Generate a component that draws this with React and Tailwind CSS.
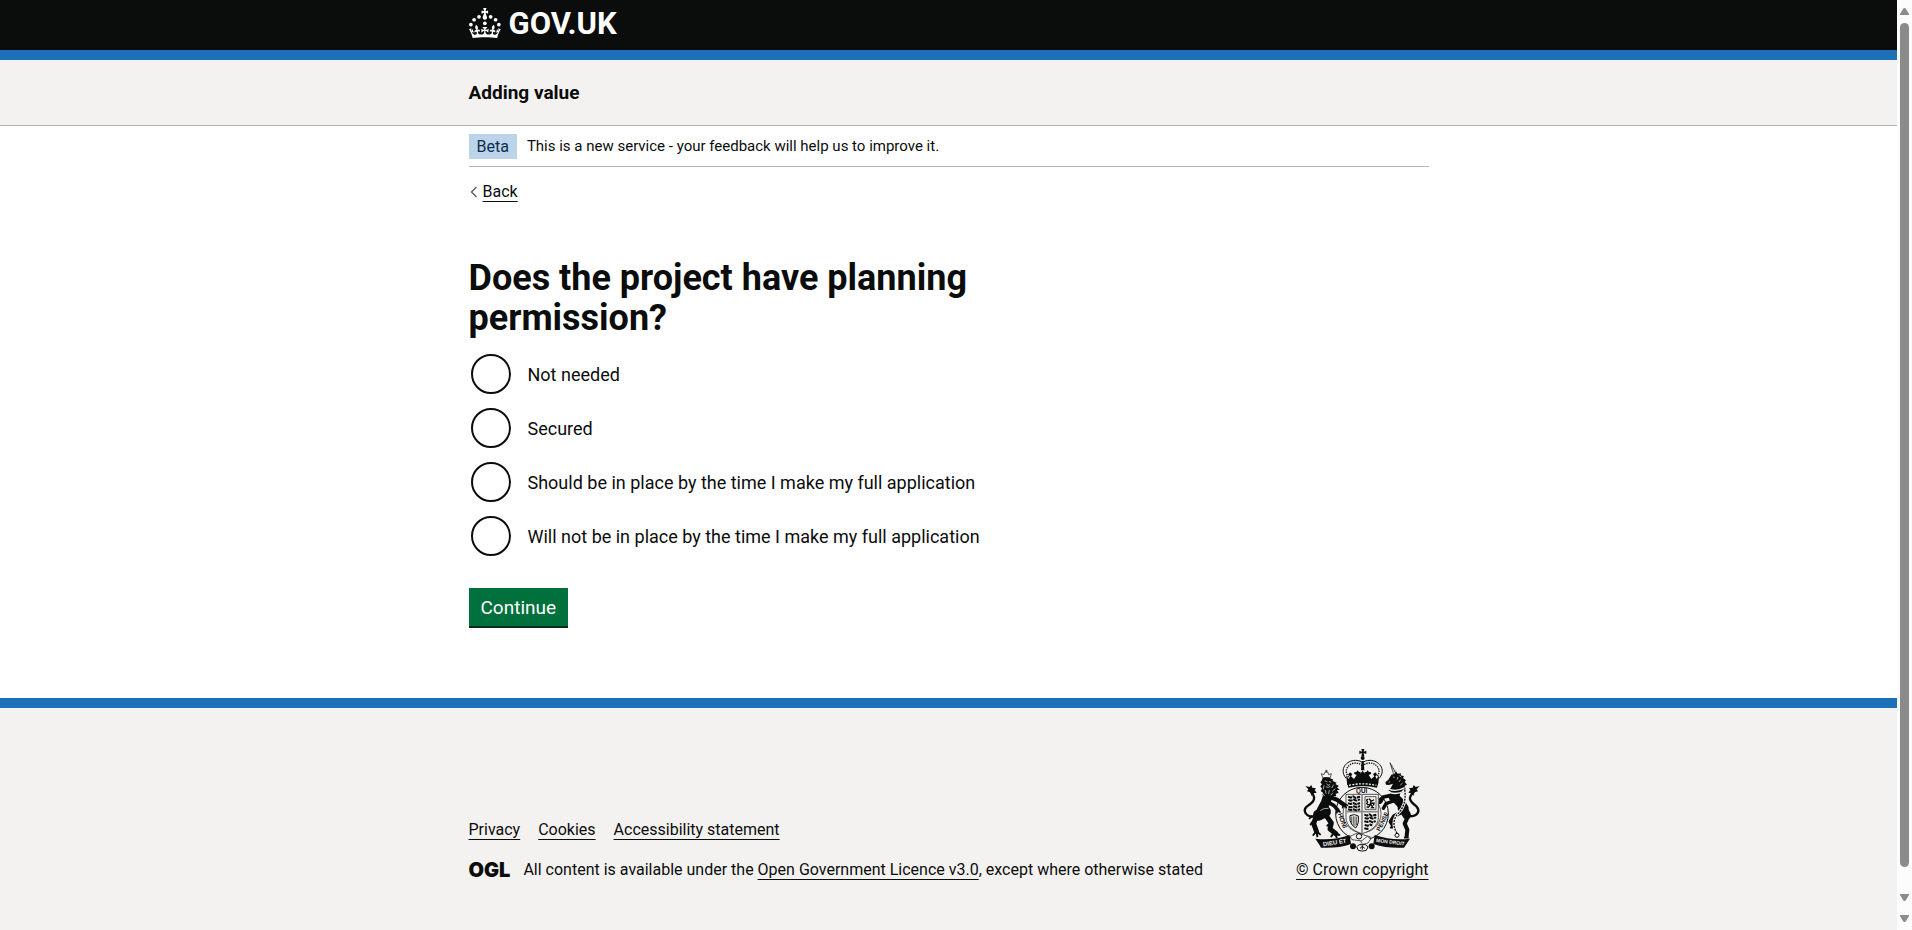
const OPTIONS = [
  'Not needed',
  'Secured',
  'Should be in place by the time I make my full application',
  'Will not be in place by the time I make my full application',
];

const LINK = 'underline decoration-1 underline-offset-4';

function Container({ className = '', children }) {
  return <div className={`mx-auto w-full max-w-[960px] ${className}`}>{children}</div>;
}

function Crown() {
  return (
    <svg viewBox="0 0 64 60" className="h-[30px] w-8" fill="currentColor" aria-hidden="true">
      <circle cx="20" cy="17.6" r="3.7" />
      <circle cx="10.2" cy="23.5" r="3.7" />
      <circle cx="3.7" cy="33.2" r="3.7" />
      <circle cx="31.7" cy="30.6" r="3.7" />
      <circle cx="43.3" cy="17.6" r="3.7" />
      <circle cx="53.2" cy="23.5" r="3.7" />
      <circle cx="59.7" cy="33.2" r="3.7" />
      <path d="M33.1,9.8c.2-.1.3-.3.5-.5l4.6,2.4v-6.8l-4.6,1.5c-.1-.2-.3-.3-.5-.5l1.9-5.9h-6.7l1.9,5.9c-.2.1-.3.3-.5.5l-4.6-1.5v6.8l4.6-2.4c.1.2.3.3.5.5l-2.6,8c-.9,2.8,1.2,5.7,4.1,5.7h0c3,0,5.1-2.9,4.1-5.7l-2.6-8ZM37,37.9s-3.4,3.8-4.1,6.1c2.2,0,4.2-.5,6.4-2.8l-.7,8.5c-2-2.8-4.4-4.1-5.7-3.8.1,3.1.5,6.7,5.8,7.2,3.7.3,6.7-1.5,7-3.8.4-2.6-2-4.3-3.7-1.6-1.4-4.5,2.4-6.1,4.9-3.2-1.9-4.5-1.8-7.7,2.4-10.9,3,4,2.6,7.3-1.2,11.1,2.4-1.3,6.2,0,4,4.6-1.2-2.8-3.7-2.2-4.2.2-.3,1.7.7,3.7,3,4.2,1.9.3,4.7-.9,7-5.9-1.3,0-2.4.7-3.9,1.7l2.4-8c.6,2.3,1.4,3.7,2.2,4.5.6-1.6.5-2.8,0-5.3l5,1.8c-2.6,3.6-5.2,8.7-7.3,17.5-7.4-1.1-15.7-1.7-24.5-1.7h0c-8.8,0-17.1.6-24.5,1.7-2.1-8.9-4.7-13.9-7.3-17.5l5-1.8c-.5,2.5-.6,3.7,0,5.3.8-.8,1.6-2.3,2.2-4.5l2.4,8c-1.5-1-2.6-1.7-3.9-1.7,2.3,5,5.2,6.2,7,5.9,2.3-.4,3.3-2.4,3-4.2-.5-2.4-3-3.1-4.2-.2-2.2-4.6,1.6-6,4-4.6-3.7-3.7-4.2-7.1-1.2-11.1,4.2,3.2,4.3,6.4,2.4,10.9,2.5-2.8,6.3-1.3,4.9,3.2-1.8-2.7-4.1-1-3.7,1.6.3,2.3,3.3,4.1,7,3.8,5.4-.5,5.7-4.2,5.8-7.2-1.3-.2-3.7,1-5.7,3.8l-.7-8.5c2.2,2.3,4.2,2.7,6.4,2.8-.7-2.3-4.1-6.1-4.1-6.1h10.6Z" />
    </svg>
  );
}

function CoatOfArms() {
  return (
    <svg viewBox="72 35 360 315" className="h-[105px] w-[120px]" fill="#0b0c0c" aria-hidden="true">
      {/* crown */}
      <path d="M250 38h9l-2 8 8-3v10l-8-3 2 10h-9l2-10-8 3v-10l8 3z" />
      <circle cx="254" cy="65" r="6" />
      <path d="M204 126c-22-28 2-54 28-54 11 0 18 3 22 8 4-5 11-8 22-8 26 0 50 26 28 54" fill="none" stroke="#0b0c0c" strokeWidth="3" />
      <path d="M212 122c-18-22 2-42 20-42 10 0 18 4 22 10 4-6 12-10 22-10 18 0 38 20 20 42" fill="none" stroke="#0b0c0c" strokeWidth="4" strokeDasharray="4 3" />
      <path d="M251 74h6l2 28h-10z" />
      <path d="M204 116l8 12 4-8-6-5 6-7 7 6-4 6 9 8 8-12-8-4 2-5h5l4-5 4 5h5l-1 5 7-9 7 9-1-5h5l4-5 4 5h5l2 5-8 4 8 12 9-8-4-6 7-6 6 7-6 5 4 8 8-12-4 30h-92z" />
      <path d="M207 138q47-10 94 0l-4 16q-43-10-86 0z" />
      <path d="M213 147q41-9 82 0" fill="none" stroke="#f3f2f1" strokeWidth="4" strokeDasharray="6 4" />

      {/* garter */}
      <circle cx="252" cy="232" r="79" fill="#f3f2f1" stroke="#0b0c0c" strokeWidth="3" />
      <circle cx="252" cy="232" r="57" fill="none" stroke="#0b0c0c" strokeWidth="2" />
      <g fontFamily="Liberation Sans, sans-serif" fontSize="19" fontWeight="700" textAnchor="middle">
        <text x="251" y="170">QUI</text>
        <text transform="translate(187 255) rotate(70)">HONI</text>
        <text transform="translate(319 258) rotate(-64)" fontSize="18">PENSE</text>
      </g>

      {/* shield */}
      <path d="M204 174h97v70c0 24-22 40-49 48-26-8-48-24-48-48z" fill="#f3f2f1" stroke="#0b0c0c" strokeWidth="2" />
      <path d="M204 226h97M252 174v117" stroke="#8a8a8a" strokeWidth="5" />
      <g fill="none" stroke="#0b0c0c" strokeWidth="6">
        <path d="M210 181l8 3 8-4 6 5 14-4M211 191l8 2 8-3 8 3 11-4M210 201l9 2 8-3 8 4 11-4M211 211l9 2 8-3 8 3 10-4M210 219l8 2 9-2 8 3 11-3" strokeDasharray="13 2" />
        <path d="M259 235l8 3 8-4 6 5 14-4M260 245l8 2 8-3 8 3 11-4M259 255l9 2 8-3 8 4 9-4M260 266l9 2 8-3 6 2M259 276l8 2 6-3" strokeDasharray="13 2" />
      </g>
      <path d="M261 181h33v38h-33z" fill="none" stroke="#0b0c0c" strokeWidth="2" />
      <path d="M274 188l5 5-2 10 6 6M279 195l8-4M278 201l10-1-1 6M277 204l-8 1-3-4M277 206l-6 7-4-1M283 209l-2 5 6 0M269 199l-3-8 3-2" fill="none" stroke="#0b0c0c" strokeWidth="4" strokeLinecap="round" />
      <path d="M216 238q14-7 25 1c2 15-1 28-8 36q-14-8-17-23z" fill="none" stroke="#0b0c0c" strokeWidth="3" />
      <path d="M221 241v19M226 240v27M231 240v30M236 241v26" stroke="#0b0c0c" strokeWidth="2" />

      {/* lion */}
      <path d="M134 124l-4-12 8 3 3-8h8l3 8 8-3-3 12z" fill="#f3f2f1" stroke="#0b0c0c" strokeWidth="2" />
      <path d="M145 100v8M141 104h8" stroke="#0b0c0c" strokeWidth="2" />
      <path d="M133 126q12-6 24 0l9 4-2 4 12 5-4 4 11 6-6 4 8 7-8 2 5 8-9 2 2 8-9-1-4 7-9-3-8 4-4-9-8-1 2-8-7-5 4-7-5-7 5-6-5-6 5-6z" />
      <g fill="none" stroke="#0b0c0c" strokeLinecap="round" strokeLinejoin="round">
        <path d="M150 176q-6 26-20 46" strokeWidth="28" />
        <path d="M142 226q-12 6-20 10" strokeWidth="34" />
        <path d="M155 182l22 8 22 16" strokeWidth="13" />
        <path d="M199 206l6 8M196 206l-2 8M200 203l8 4" strokeWidth="5" />
        <path d="M148 196l20 12 12 14" strokeWidth="11" />
        <path d="M180 222l6 5M178 222l-2 8" strokeWidth="5" />
        <path d="M113 244l-6 18 8 22" strokeWidth="15" />
        <path d="M114 286l-8 10M116 288l2 12M118 286l8 8M104 256l-6 8M101 240l-6 6" strokeWidth="6" />
        <path d="M146 240l14 20-4 18 18 14" strokeWidth="15" />
        <path d="M174 292l10 4M172 294l4 9M166 292l-6 8M156 262l-8 6" strokeWidth="6" />
        <path d="M112 240c-30 4-38-18-26-29 12-10 24-14 22-29-2-10-8-12-12-20" strokeWidth="7" />
      </g>
      <path d="M82 149l12 3 6-6 3 8 11 2-4 5 6 8-9 2-6 8-4-11-10-3 4-6z" />
      <g stroke="#f3f2f1" strokeWidth="2" fill="none" strokeLinecap="round">
        <path d="M142 134l5 2M154 136l5 1M146 143l4 4 5-2M145 152q6 3 11-1M166 146l-4 8M171 158l-7 6M138 148l-2 10M142 162l2 9M154 162l-2 10M164 170l-5 6M135 172l4 6" />
        <path d="M128 222q10-8 22-6" />
      </g>

      {/* unicorn */}
      <path d="M336 79l18 32-7 3z" fill="#f3f2f1" stroke="#0b0c0c" strokeWidth="2" />
      <path d="M340 90l3-2M344 98l4-2M347 106l5-3" stroke="#0b0c0c" strokeWidth="2" />
      <path d="M340 115l10-2 4-8 5 7 10-1-1 6 10 3-3 5 9 7-4 4 7 9-7 3 3 12-9-1-1 10-42-6 10-12 4-9-12 4-9-1-2-7 9-8z" />
      <g fill="none" stroke="#0b0c0c" strokeLinecap="round" strokeLinejoin="round">
        <path d="M357 150l-9 34" strokeWidth="30" strokeLinecap="butt" />
        <path d="M346 182q18 10 32 34" strokeWidth="28" />
        <path d="M372 216q10 10 14 20" strokeWidth="26" />
        <path d="M336 178l-20 4-8 14" strokeWidth="11" />
        <path d="M308 194l-2 6M312 184l-6 4" strokeWidth="7" />
        <path d="M346 194l-22 8-8 14" strokeWidth="10" />
        <path d="M370 228l-22 12-10 16 6 10" strokeWidth="12" />
        <path d="M390 240l-10 22 8 18-2 18" strokeWidth="12" />
        <path d="M386 296l-6 8h10zM346 266l-8 8h10z" strokeWidth="5" />
        <path d="M394 240c28 0 32-18 22-29-10-10-22-14-20-27 2-10 8-12 12-20" strokeWidth="7" />
      </g>
      <path d="M345 122l5 1M336 136l-4 2M360 122l-3 8M368 130l-5 7M374 140l-7 6M364 118l6 4" stroke="#f3f2f1" strokeWidth="2" />
      <path d="M330 157q24 12 50-3M327 166q26 12 52-2" stroke="#f3f2f1" strokeWidth="4" fill="none" />
      <path d="M425 149l-12 3-6-6-3 8-11 2 4 5-6 8 9 2 6 8 4-11 10-3-4-6z" />
      <path d="M380 160c5 31-4 56-20 72s-15 41-3 58" fill="none" stroke="#f3f2f1" strokeWidth="9" />
      <path d="M380 160c5 31-4 56-20 72s-15 41-3 58" fill="none" stroke="#0b0c0c" strokeWidth="4" strokeDasharray="6 3" />
      <circle cx="357" cy="297" r="6" fill="#f3f2f1" stroke="#0b0c0c" strokeWidth="3" />

      {/* buckle, motto scroll and thistles */}
      <path d="M216 300l22-10 40 12-12 14-44-6z" fill="#f3f2f1" stroke="#0b0c0c" strokeWidth="2" />
      <circle cx="243" cy="300" r="8" fill="none" stroke="#0b0c0c" strokeWidth="3" />
      <path d="M268 300l10 8-8 12-16 4-6-8z" fill="#f3f2f1" stroke="#0b0c0c" strokeWidth="2" />
      <path d="M112 307q56 6 103-11l4 27q-40 14-90 11l-4-7z" />
      <path d="M396 307q-56 6-106-11l-4 27q42 14 92 11l5-7z" />
      <g fill="#f3f2f1" fontFamily="Liberation Sans, sans-serif" fontSize="18" fontWeight="700">
        <text transform="translate(136 330) rotate(-9)">DIEU ET</text>
        <text transform="translate(294 317) rotate(7)" fontSize="15">MON DROIT</text>
      </g>
      <circle cx="225" cy="330" r="9" />
      <circle cx="281" cy="330" r="9" />
      <path d="M236 331q7-9 17-6 10-3 17 6l-5 11q-12 5-24 0z" fill="#f3f2f1" stroke="#0b0c0c" strokeWidth="3" />
      <path d="M253 327v13M246 336l7-6 7 6" stroke="#0b0c0c" strokeWidth="3" fill="none" />
    </svg>
  );
}

function ScrollArrow({ className = '' }) {
  return (
    <svg viewBox="0 0 9 7" className={`h-[7px] w-[9px] ${className}`} fill="#8b8b8b">
      <path d="M4.500 0q1 0 1.500 1L9 6v1H0V6l3-5q.5-1 1.500-1z" />
    </svg>
  );
}

function ScrollTrack() {
  return (
    <div className="sticky top-0 flex h-screen w-[15px] shrink-0 flex-col items-center bg-[#fcfcfc] py-2" aria-hidden="true">
      <ScrollArrow />
      <div className="mt-2 mb-[27px] w-[9px] grow rounded-full bg-[#8b8b8b]" />
      <ScrollArrow className="rotate-180" />
      <ScrollArrow className="mt-[14px] rotate-180" />
    </div>
  );
}

export default function App() {
  return (
    <div className="flex min-h-screen font-['Roboto',sans-serif] text-[#0b0c0c]">
      <div className="flex min-w-0 grow flex-col bg-white">
        <header>
          <div className="border-b-10 border-[#1d70b8] bg-[#0b0c0c] text-white">
            <Container>
              <a href="#home" className="flex h-[50px] w-fit items-center gap-2 pb-1" aria-label="GOV.UK">
                <Crown />
                <span className="pt-0.5 text-[31px] leading-8 font-bold">GOV.UK</span>
              </a>
            </Container>
          </div>
          <div className="border-b border-[#b1b4b6] bg-[#f3f2f1]">
            <Container className="py-5">
              <a href="#service" className="block w-fit text-[19px] leading-[25px] font-bold">Adding value</a>
            </Container>
          </div>
        </header>

        <Container>
          <div className="flex items-center gap-[10px] border-b border-[#b1b4b6] pt-2 pb-[7px]">
            <strong className="bg-[#bbd4ea] px-2 text-base leading-[25px] font-normal text-[#0c2d4a]">Beta</strong>
            <span className="pb-0.5 text-[15px] leading-5">This is a new service - your feedback will help us to improve it.</span>
          </div>
          <a href="#back" className="mt-[15px] flex w-fit items-center gap-1 text-base leading-5">
            <svg viewBox="0 0 10 12" className="h-3 w-[10px]" fill="none" stroke="#505a5f" strokeWidth="1.300" aria-hidden="true">
              <path d="M7.500 1L2.500 6l5 5" />
            </svg>
            <span className={LINK}>Back</span>
          </a>
        </Container>

        <Container className="grow pt-14 pb-[72px]">
          <main className="max-w-[630px]">
            <form onSubmit={(event) => event.preventDefault()}>
              <fieldset>
                <legend className="max-w-[540px] text-4xl leading-10 font-bold">
                  <h1>Does the project have planning permission?</h1>
                </legend>
                <div className="mt-4 flex flex-col gap-[14px]">
                  {OPTIONS.map((option, index) => (
                    <div key={option} className="flex items-center pl-0.5">
                      <input
                        type="radio"
                        id={`planning-${index}`}
                        name="planning"
                        value={option}
                        className="size-10 appearance-none rounded-full border-2 border-[#0b0c0c] bg-white checked:bg-[#0b0c0c] checked:bg-clip-content checked:p-2"
                      />
                      <label htmlFor={`planning-${index}`} className="pt-0.5 pl-[17px] text-lg leading-6">{option}</label>
                    </div>
                  ))}
                </div>
              </fieldset>
              <button type="submit" className="mt-8 bg-[#00703c] px-3 pt-2 pb-[7px] text-[19px] leading-[23px] text-white shadow-[0_2px_0_#002d18]">
                Continue
              </button>
            </form>
          </main>
        </Container>

        <footer className="border-t-10 border-[#1d70b8] bg-[#f3f2f1] text-base leading-5">
          <Container className="flex items-end justify-between pt-10 pb-[50px]">
            <div className="flex flex-col gap-5">
              <nav className="flex gap-[18px]" aria-label="Support links">
                <a href="#privacy" className={LINK}>Privacy</a>
                <a href="#cookies" className={LINK}>Cookies</a>
                <a href="#accessibility" className={LINK}>Accessibility statement</a>
              </nav>
              <div className="flex items-center gap-[13px]">
                <span className="font-['Inter',sans-serif] text-xl leading-5 font-black">OGL</span>
                <p>
                  All content is available under the{' '}
                  <a href="#licence" className={LINK}>Open Government Licence v3.0</a>, except where otherwise stated
                </p>
              </div>
            </div>
            <a href="#copyright" className="flex flex-col items-center gap-[7px]">
              <CoatOfArms />
              <span className={LINK}>© Crown copyright</span>
            </a>
          </Container>
        </footer>
      </div>
      <ScrollTrack />
    </div>
  );
}
